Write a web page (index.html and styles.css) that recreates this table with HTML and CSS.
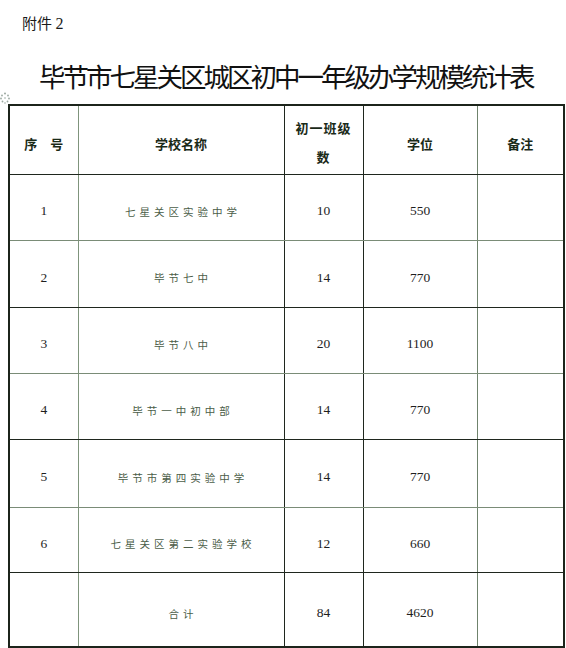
FILE: index.html
```html
<!DOCTYPE html>
<html lang="zh-CN">
<head>
<meta charset="utf-8">
<title>毕节市七星关区城区初中一年级办学规模统计表</title>
<link rel="stylesheet" href="styles.css">
</head>
<body>
<div class="doc">
  <div class="attach"><span class="cn">附件</span> <span class="num">2</span></div>
  <h1 class="title">毕节市七星关区城区初中一年级办学规模统计表</h1>
  <div class="table-wrap">
    <svg class="handle" width="10" height="12" viewBox="0 0 10 12" aria-hidden="true">
      <g fill="#9aa8a0">
        <circle cx="5" cy="1.5" r="1"/>
        <circle cx="2" cy="3.5" r="0.9"/>
        <circle cx="8" cy="3.5" r="0.9"/>
        <circle cx="1" cy="6.5" r="0.9"/>
        <circle cx="9" cy="6.5" r="0.9"/>
        <circle cx="5" cy="6" r="0.8"/>
        <circle cx="2.5" cy="9.5" r="0.9"/>
        <circle cx="7.5" cy="9.5" r="0.9"/>
        <circle cx="5" cy="11" r="0.8"/>
      </g>
    </svg>
    <table class="stats">
      <colgroup>
        <col class="c-no"><col class="c-name"><col class="c-cls"><col class="c-seat"><col class="c-note">
      </colgroup>
      <thead>
        <tr class="r-head">
          <th>序　号</th>
          <th>学校名称</th>
          <th class="two-line">初一班级<br>数</th>
          <th>学位</th>
          <th>备注</th>
        </tr>
      </thead>
      <tbody>
        <tr class="r1"><td class="num">1</td><td class="name">七星关区实验中学</td><td class="num">10</td><td class="num">550</td><td></td></tr>
        <tr class="r2"><td class="num">2</td><td class="name">毕节七中</td><td class="num">14</td><td class="num">770</td><td></td></tr>
        <tr class="r3"><td class="num">3</td><td class="name">毕节八中</td><td class="num">20</td><td class="num">1100</td><td></td></tr>
        <tr class="r4"><td class="num">4</td><td class="name">毕节一中初中部</td><td class="num">14</td><td class="num">770</td><td></td></tr>
        <tr class="r5"><td class="num">5</td><td class="name">毕节市第四实验中学</td><td class="num">14</td><td class="num">770</td><td></td></tr>
        <tr class="r6"><td class="num">6</td><td class="name">七星关区第二实验学校</td><td class="num">12</td><td class="num">660</td><td></td></tr>
        <tr class="r7"><td></td><td class="name">合计</td><td class="num">84</td><td class="num">4620</td><td></td></tr>
      </tbody>
    </table>
  </div>
</div>
</body>
</html>
```
FILE: styles.css
```css
html, body {
  margin: 0;
  padding: 0;
  background: #ffffff;
}

.doc {
  width: 566px;
  height: 648px;
  overflow: hidden;
  font-family: "Noto Sans CJK SC", "Liberation Sans", sans-serif;
  color: #111;
}

.attach {
  padding: 11px 0 0 22px;
  height: 24px;
  font-size: 15px;
  line-height: 24px;
  color: #1a1a1a;
}

.attach .num {
  font-family: "Liberation Serif", serif;
  font-size: 16px;
}

.title {
  margin: 22px 0 0 39px;
  height: 37px;
  font-size: 26.5px;
  line-height: 37px;
  font-weight: 400;
  letter-spacing: -3px;
  white-space: nowrap;
  color: #111;
}

.table-wrap {
  position: relative;
  margin: 10px 0 0 8px;
}

.handle {
  position: absolute;
  left: -8px;
  top: -12px;
}

.stats {
  border-collapse: collapse;
  table-layout: fixed;
  width: 555px;
  border: 2px solid #1c241b;
}

.c-no { width: 69px; }
.c-name { width: 206px; }
.c-cls { width: 79px; }
.c-seat { width: 114px; }
.c-note { width: 87px; }

.stats th,
.stats td {
  border: 1px solid #1f271e;
  padding: 8px 0 0 0;
  text-align: center;
  vertical-align: middle;
}

.stats th:first-child,
.stats td:first-child {
  border-right: 1.5px solid #7f947c;
}

.stats th:nth-child(4),
.stats td:nth-child(4) {
  border-right-color: #6f836c;
}

.stats th {
  font-family: "Noto Sans CJK SC", sans-serif;
  font-size: 13px;
  font-weight: 600;
  color: #1a2a18;
  line-height: 29px;
}

.stats th.two-line {
  padding-top: 4px;
  letter-spacing: 1px;
}

.r-head { height: 69px; }
.r1 { height: 66px; }
.r2 { height: 67px; }
.r3 { height: 66px; }
.r4 { height: 66px; }
.r5 { height: 68px; }
.r6 { height: 65px; }
.r7 { height: 75px; }

.r1 td, .r3 td, .r5 td { border-bottom-color: #7a8c77; }

.stats td.num {
  font-family: "Liberation Serif", serif;
  font-size: 13.5px;
  color: #1e1e1e;
}

.stats td.name {
  font-family: "Noto Sans CJK SC", sans-serif;
  font-size: 10.5px;
  letter-spacing: 4px;
  color: #4b5d48;
  text-indent: 4px;
}
```
